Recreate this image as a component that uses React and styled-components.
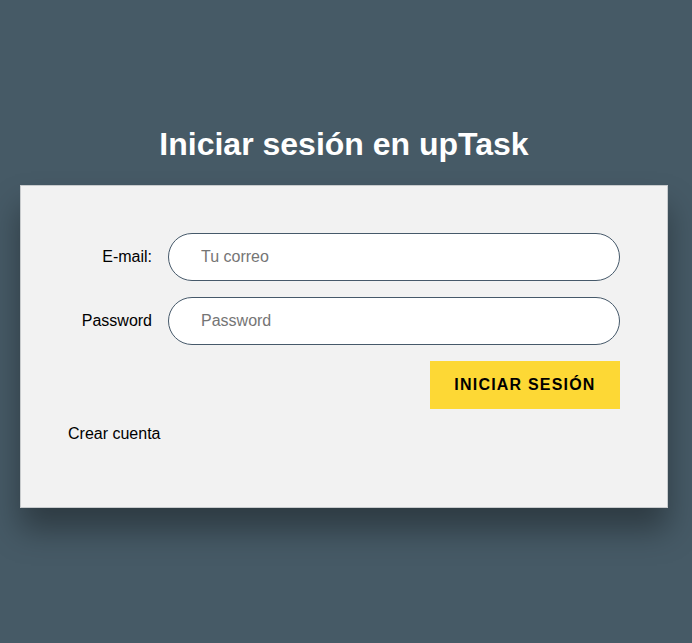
import React from 'react'
import styled, { createGlobalStyle } from 'styled-components'

const GlobalStyle = createGlobalStyle`
    body {
        margin: 0;
        background-color: #465a66;
        font-family: "Liberation Sans", Arial, sans-serif;
    }
`

const App = () => {
  return (
    <>
      <GlobalStyle />
      <Page>
        <Title>Iniciar sesión en upTask</Title>
        <Card>
          <Form onSubmit={(e) => e.preventDefault()}>
            <Field>
              <Label htmlFor="email">E-mail:</Label>
              <Input id="email" type="email" placeholder="Tu correo" />
            </Field>
            <Field>
              <Label htmlFor="password">Password</Label>
              <Input id="password" type="password" placeholder="Password" />
            </Field>
            <Actions>
              <SubmitButton type="submit">Iniciar sesión</SubmitButton>
            </Actions>
          </Form>
          <Link href="#">Crear cuenta</Link>
        </Card>
      </Page>
    </>
  )
}

export default App

const Page = styled.div`
    min-height: 643px;
    display: flex;
    flex-direction: column;
    align-items: center;
    padding: 125px 4px 0 0;
    box-sizing: border-box;
`
const Title = styled.h1`
    margin: 0 0 22px;
    color: #fff;
    font-size: 32px;
    line-height: 38px;
    font-weight: 700;
`
const Card = styled.div`
    width: 648px;
    box-sizing: border-box;
    background-color: #f2f2f2;
    border: 1px solid #c8cbcd;
    padding: 47px 47px 64px;
    box-shadow: 0 22px 30px rgba(0, 0, 0, 0.35);
`
const Form = styled.form`
    display: flex;
    flex-direction: column;
    gap: 16px;
`
const Field = styled.div`
    display: flex;
    align-items: center;
    gap: 16px;
`
const Label = styled.label`
    width: 84px;
    flex-shrink: 0;
    text-align: right;
    font-size: 16px;
    color: #000;
`
const Input = styled.input`
    flex: 1;
    height: 48px;
    box-sizing: border-box;
    border: 1px solid #46596a;
    border-radius: 24px;
    background: #fff;
    padding: 0 32px;
    font-family: inherit;
    font-size: 16px;
    outline: none;
    &::placeholder {
        color: #757575;
    }
`
const Actions = styled.div`
    display: flex;
    justify-content: flex-end;
`
const SubmitButton = styled.button`
    height: 48px;
    width: 190px;
    border: none;
    background-color: #fdd835;
    color: #000;
    font-family: inherit;
    font-size: 16px;
    font-weight: 700;
    text-transform: uppercase;
    letter-spacing: 1.2px;
    cursor: pointer;
`
const Link = styled.a`
    display: inline-block;
    margin-top: 16px;
    color: #000;
    font-size: 16px;
    text-decoration: none;
`
